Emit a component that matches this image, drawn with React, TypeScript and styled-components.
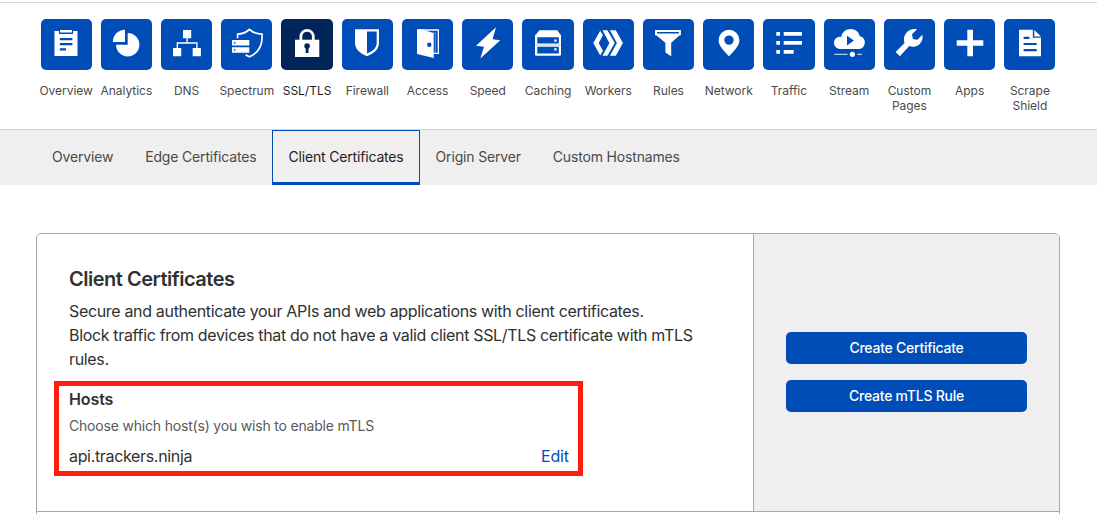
import React from "react";
import styled, { createGlobalStyle } from "styled-components";

const BLUE = "#004db8";
const NAVY = "#002659";

const GlobalStyle = createGlobalStyle`
  *, *::before, *::after { box-sizing: border-box; }
  html, body { margin: 0; padding: 0; }
  body {
    background: #fff;
    color: #313131;
    font-family: Inter, "Liberation Sans", sans-serif;
    overflow: hidden;
  }
`;

const Page = styled.div`
  height: 514px;
  padding-top: 2px;
  overflow: hidden;
`;

const AppNav = styled.nav`
  display: grid;
  grid-template-columns: repeat(17, 1fr);
  height: 128px;
  padding: 16px 37px 0 36px;
  border-top: 1px solid #d5d5d5;
  border-bottom: 1px solid #d5d5d5;
`;

const AppItem = styled.a`
  display: flex;
  flex-direction: column;
  align-items: center;
`;

const Tile = styled.span<{ $active?: boolean }>`
  display: block;
  width: 51.2px;
  height: 51px;
  border-radius: 5px;
  color: ${(p) => (p.$active ? NAVY : BLUE)};
  background: currentColor;

  svg {
    display: block;
    width: 51px;
    height: 51px;
  }
`;

const AppLabel = styled.span<{ $active?: boolean }>`
  margin-top: 13px;
  font-size: 12px;
  line-height: 15px;
  letter-spacing: -0.03px;
  text-align: center;
  color: ${(p) => (p.$active ? "#1d1d1d" : "#4a4a4a")};
`;

const TabBar = styled.nav`
  display: flex;
  height: 55px;
  padding-left: 36px;
  background: #efefef;
`;

const Tab = styled.a<{ $active?: boolean }>`
  padding: 17px 15px 0;
  border: 1px solid ${(p) => (p.$active ? BLUE : "transparent")};
  border-bottom-width: 3px;
  font-size: 14px;
  line-height: 18px;
  letter-spacing: -0.17px;
  white-space: nowrap;
  color: ${(p) => (p.$active ? "#1d1d1d" : "#4a4a4a")};
`;

const Card = styled.section`
  margin: 48px 37px 0 36px;
  height: 320px;
  border: 1px solid #a9a9a9;
  border-radius: 5px;
  overflow: hidden;
`;

const CardBody = styled.div`
  display: flex;
  height: 278px;
  border-bottom: 1px solid #a9a9a9;
`;

const Details = styled.div`
  flex: 1;
  padding: 32px 32px 0;
`;

const Title = styled.h2`
  margin: 0 0 7px;
  font-size: 20px;
  font-weight: 600;
  line-height: 26px;
  letter-spacing: -0.48px;
`;

const Copy = styled.p`
  margin: 0;
  font-size: 16px;
  line-height: 24px;
  letter-spacing: -0.333px;
`;

const HostsBox = styled.div`
  width: 529px;
  height: 95px;
  margin: 10px 0 0 -15.5px;
  padding: 1px 8.5px 0 10.5px;
  border: 5px solid #ff1d0d;
`;

const HostsTitle = styled.h3`
  margin: 0;
  font-size: 16px;
  font-weight: 600;
  line-height: 24px;
  letter-spacing: -0.1px;
`;

const Hint = styled.p`
  margin: 6px 0 9px;
  font-size: 14px;
  line-height: 18px;
  letter-spacing: -0.19px;
  color: #595959;
`;

const HostRow = styled.div`
  display: flex;
  justify-content: space-between;
  font-size: 16px;
  line-height: 24px;
  letter-spacing: -0.333px;
`;

const EditLink = styled.a`
  color: ${BLUE};
  letter-spacing: -0.1px;
`;

const Actions = styled.div`
  display: flex;
  flex-direction: column;
  justify-content: center;
  gap: 16px;
  width: 306px;
  padding: 0 32px 2px;
  border-left: 1px solid #a9a9a9;
  background: #efefef;
`;

const Button = styled.button`
  height: 32px;
  padding: 0;
  border: 0;
  border-radius: 5px;
  background: ${BLUE};
  color: #fff;
  font: 500 14px/32px Inter, "Liberation Sans", sans-serif;
  letter-spacing: -0.25px;
`;

const Icon = ({ children }: { children: React.ReactNode }) => (
  <svg viewBox="0 0 51 51" fill="#fff" aria-hidden="true">
    {children}
  </svg>
);

type App = { label: string; active?: boolean; icon: React.ReactNode };

const apps: App[] = [
  {
    label: "Overview",
    icon: (
      <>
        <path d="M13.500 12h4.500v3.100h14V12h4.500v25h-23z" />
        <path d="M19 11h12v2.500H19z" />
        <path d="M18.800 19h12.600v2.200H18.800zM18.800 24.100h12.600v2.200H18.800zM18.800 29.200H25v2.300h-6.200z" fill="currentColor" />
      </>
    ),
  },
  {
    label: "Analytics",
    icon: (
      <>
        <path d="M26.700 25.700V14A11.700 11.700 0 1 1 15 25.700z" />
        <path d="M24 23H11.800A12.200 12.200 0 0 1 24 10.800z" />
      </>
    ),
  },
  {
    label: "DNS",
    icon: (
      <>
        <path d="M22 11h8.200v8.200H22zM12 29h8.200v8.200H12zM31.700 29h8.200v8.200h-8.200z" />
        <path d="M26.100 19v5M16.300 29v-5h19.600v5" fill="none" stroke="#fff" strokeWidth="1.300" />
      </>
    ),
  },
  {
    label: "Spectrum",
    icon: (
      <>
        <path d="M11 21h17.300v5.400H11zM11 28.300h17.300v5.400H11z" />
        <path d="M12.900 23h1.500v1.500h-1.500zM12.900 30.300h1.500v1.500h-1.500z" fill="currentColor" />
        <path
          d="M16.600 19.200v-4c5-.3 8.500-1.700 11.800-4.700 3.500 3 7.400 4.500 12.600 4.700.8 11.300-3.400 18.800-12.600 22.600-1.500-.6-2.700-1.200-3.800-2"
          fill="none"
          stroke="#fff"
          strokeWidth="1.700"
        />
      </>
    ),
  },
  {
    label: "SSL/TLS",
    active: true,
    icon: (
      <>
        <path d="M14 20.700h24.300V38H14z" />
        <path d="M19.900 21v-3.500a6.200 6.200 0 0 1 12.400 0V21" fill="none" stroke="#fff" strokeWidth="2.800" />
        <circle cx="26.100" cy="27" r="2.800" fill="currentColor" />
        <path d="M24.700 28h2.800v6h-2.800z" fill="currentColor" />
      </>
    ),
  },
  {
    label: "Firewall",
    icon: (
      <path
        fillRule="evenodd"
        d="M13 10.200h24v13.500c0 6.300-4.500 10.500-12 13.500-7.500-3-12-7.200-12-13.500zM25 12.600v22c6.400-2.900 9.700-6 9.700-10.900V12.600z"
      />
    ),
  },
  {
    label: "Access",
    icon: (
      <>
        <path d="M15 10.300h4L31.700 14v25L15 35z" />
        <path d="M17 11h19.300v23.300h-5" fill="none" stroke="#fff" strokeWidth="1.300" />
        <path d="M31.500 13.800h1.800v21" fill="none" stroke="#fff" strokeWidth=".4" />
        <circle cx="27.300" cy="25.700" r="2.200" fill="currentColor" />
      </>
    ),
  },
  {
    label: "Speed",
    icon: <path d="M34 8.300 14 26.800l8 .9-3.700 11.700 20-18.100-7.800-1z" />,
  },
  {
    label: "Caching",
    icon: (
      <>
        <path d="M17.300 11.300h18l3.700 5.200H13.300z" />
        <path
          fillRule="evenodd"
          d="M13 15.700h26V35.500a1.200 1.200 0 0 1-1.200 1.200H14.200A1.200 1.200 0 0 1 13 35.500zM15.300 18.200v6.400h21.500v-6.400zM15.300 27.800v6.700h21.500v-6.700z"
        />
        <path d="M32.300 20.400h2.300v2.300h-2.300zM32.300 29.300h2.300v2.300h-2.300z" />
        <path d="M13 26.100h26" stroke="currentColor" strokeWidth=".6" opacity=".5" />
      </>
    ),
  },
  {
    label: "Workers",
    icon: (
      <>
        <path d="M17.200 11.800 10.300 24l6.900 12.500 2.800-4.700L15.700 24l4.200-7.800z" />
        <path d="M19.500 11.300h4.900L31.800 24l-7.400 12.800h-4.900L26.400 24z" />
        <path d="M26.900 11.300h5.900L39.900 24l-7.100 12.800h-5.900L33.900 24z" />
      </>
    ),
  },
  {
    label: "Rules",
    icon: (
      <>
        <path fillRule="evenodd" d="M12 11h25.900v5.200H12zM14 13v1.600h21.900V13z" />
        <path d="M13 16h24l-8.800 7.800v13.500l-5.800-3.700v-9.800z" />
      </>
    ),
  },
  {
    label: "Network",
    icon: (
      <path
        fillRule="evenodd"
        d="M26 37.200c-5.200-5.700-10.400-10.200-10.400-16a10.400 10.400 0 0 1 20.800 0c0 5.800-5.200 10.300-10.400 16zM26 16.400a4.700 4.700 0 1 0 0 9.400 4.700 4.700 0 0 0 0-9.400z"
      />
    ),
  },
  {
    label: "Traffic",
    icon: (
      <path d="M13.300 13H17v3.700h-3.700zM20.700 13H39v3.700H20.700zM13.300 22H17v3.700h-3.700zM20.700 22H39v3.700H20.700zM13.300 31H17v3.700h-3.700zM20.700 31h10v3.700h-10z" />
    ),
  },
  {
    label: "Stream",
    icon: (
      <>
        <path d="M15.500 30a6.200 6.200 0 0 1-.3-12.300c.8-.1 1.500 0 2.200.2.300-4.400 4.500-7.900 9.400-7.900 4.600 0 8 2.900 9 7.200 3 .4 5 2.900 5 6 0 4-2.700 6.800-6.300 6.800z" />
        <path d="M23 16.700l6.900 4.900-6.900 4.900z" fill="currentColor" />
        <path d="M10.300 35.400h13.200M33.300 35.400h4.700" stroke="#fff" strokeWidth="1.200" opacity=".7" />
        <circle cx="28.400" cy="35.300" r="2.600" />
      </>
    ),
  },
  {
    label: "Custom Pages",
    icon: (
      <path d="M33 10.400l-5 4.900.9 4.700 4.600.8 4.900-5c1.200 5.700-2.700 11.500-8.400 12-1.800.1-3.400-.1-4.800-.7L15.900 37.300l-4.300-4.300L20.500 24c-2.700-7.600 4.300-15.600 12.500-13.600z" />
    ),
  },
  {
    label: "Apps",
    icon: <path d="M23.300 10.700H29v10.500h10.300v5.600H29v10.500h-5.700V26.800H12.700v-5.600h10.600z" />,
  },
  {
    label: "Scrape Shield",
    icon: (
      <>
        <path d="M15 10.700h13.800v8H37v18.600H15z" />
        <path d="M30.300 10.900l6.700 6.600h-6.700z" />
        <path d="M19.600 17.800h5.800v2.200h-5.800zM19.600 23.900h13.100v2.200H19.600zM19.600 30h13.100v2.200H19.600z" fill="currentColor" />
      </>
    ),
  },
];

const tabs = ["Overview", "Edge Certificates", "Client Certificates", "Origin Server", "Custom Hostnames"];

export default function App() {
  return (
    <>
      <GlobalStyle />
      <Page>
        <AppNav>
          {apps.map((app) => (
            <AppItem key={app.label}>
              <Tile $active={app.active}>
                <Icon>{app.icon}</Icon>
              </Tile>
              <AppLabel $active={app.active}>{app.label}</AppLabel>
            </AppItem>
          ))}
        </AppNav>
        <TabBar>
          {tabs.map((tab) => (
            <Tab key={tab} $active={tab === "Client Certificates"}>
              {tab}
            </Tab>
          ))}
        </TabBar>
        <Card>
          <CardBody>
            <Details>
              <Title>Client Certificates</Title>
              <Copy>Secure and authenticate your APIs and web applications with client certificates.</Copy>
              <Copy>Block traffic from devices that do not have a valid client SSL/TLS certificate with mTLS rules.</Copy>
              <HostsBox>
                <HostsTitle>Hosts</HostsTitle>
                <Hint>Choose which host(s) you wish to enable mTLS</Hint>
                <HostRow>
                  <span>api.trackers.ninja</span>
                  <EditLink>Edit</EditLink>
                </HostRow>
              </HostsBox>
            </Details>
            <Actions>
              <Button>Create Certificate</Button>
              <Button>Create mTLS Rule</Button>
            </Actions>
          </CardBody>
        </Card>
      </Page>
    </>
  );
}
